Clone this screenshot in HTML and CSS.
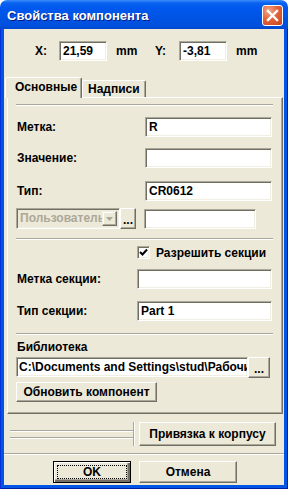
FILE: index.html
```html
<!DOCTYPE html>
<html lang="ru">
<head>
<meta charset="UTF-8" />
<title>Свойства компонента</title>
<link rel="stylesheet" href="styles.css">
</head>
<body>

<div class="window">
  <div class="titlebar">
    <span class="title">Свойства компонента</span>
    <span class="close">
      <svg width="19" height="19" viewBox="0 0 19 19"><path d="M5 5L14 14M14 5L5 14" stroke="#fff" stroke-width="2.4" stroke-linecap="square"/></svg>
    </span>
  </div>

  <div class="frame">
    <div class="client">

      <div class="coords">
        <span class="coord-label">X:</span>
        <span class="field coord">21,59</span>
        <span class="unit">mm</span>
        <span class="coord-label">Y:</span>
        <span class="field coord">-3,81</span>
        <span class="unit">mm</span>
      </div>

      <div class="tabs">
        <div class="tab active">Основные</div>
        <div class="tab">Надписи</div>
      </div>

      <div class="panel">
        <div class="etch"></div>

        <div class="row mt11"><span class="lbl">Метка:</span><span class="field main">R</span></div>
        <div class="row mt11"><span class="lbl">Значение:</span><span class="field main"></span></div>
        <div class="row mt13"><span class="lbl">Тип:</span><span class="field main">CR0612</span></div>

        <div class="row combo-row mt7">
          <div class="combo">
            <span class="combo-text">Пользовательский</span>
            <span class="combo-btn">
              <svg width="7" height="4" viewBox="0 0 7 4"><path d="M0 0H7L3.5 4Z" fill="#aca899"/></svg>
            </span>
          </div>
          <span class="btn dots">...</span>
          <span class="field user"></span>
        </div>

        <div class="etch mt9"></div>

        <div class="check-row mt6">
          <span class="checkbox">
            <svg width="9" height="9" viewBox="0 0 9 9"><path d="M1 4L3.5 6.5L8 1.5" stroke="#000" stroke-width="2" fill="none"/></svg>
          </span>
          <span>Разрешить секции</span>
        </div>

        <div class="row mt10"><span class="lbl">Метка секции:</span><span class="field section"></span></div>
        <div class="row mt12"><span class="lbl">Тип секции:</span><span class="field section">Part 1</span></div>

        <div class="etch mt12"></div>

        <div class="caption mt5">Библиотека</div>
        <div class="path-row mt3">
          <span class="field path">C:\Documents and Settings\stud\Рабочий стол</span>
          <span class="btn path-btn">...</span>
        </div>
        <span class="btn update mt4">Обновить компонент</span>
      </div>

      <div class="bind">
        <div class="rails"></div>
        <div class="vline"></div>
        <span class="btn bind-btn">Привязка к корпусу</span>
      </div>

      <div class="divider"></div>

      <div class="actions">
        <span class="btn ok"><span class="focus">OK</span></span>
        <span class="btn cancel">Отмена</span>
      </div>

    </div>
  </div>
</div>

</body>
</html>
```

FILE: styles.css
```css
body {
  margin: 0;
  background: #fff;
  font-family: "Liberation Sans", Arial, sans-serif;
  font-size: 12px;
  font-weight: 700;
  color: #000;
}
.window {
  width: 288px;
  height: 489px;
  display: flex;
  flex-direction: column;
}
.titlebar {
  height: 29px;
  box-sizing: border-box;
  border-radius: 7px 7px 0 0;
  background: linear-gradient(#3a8cf8 0, #0a62f0 3px, #0058ee 8px, #0054e3 60%, #0050dc 90%, #0046cc 100%);
  display: flex;
  align-items: flex-start;
  justify-content: space-between;
  padding: 5px 5px 0 7px;
}
.title {
  color: #fff;
  font-size: 13px;
  line-height: 21px;
  text-shadow: 1px 1px #0a1883;
}
.close {
  width: 21px;
  height: 21px;
  box-sizing: border-box;
  border: 1px solid #fff;
  border-radius: 3px;
  background: radial-gradient(circle at 30% 25%, #f3a68a 0, #e3643c 45%, #c9421c 100%);
  display: flex;
  align-items: center;
  justify-content: center;
}
.frame {
  flex: 1;
  background: #0055e5;
  padding: 0 4px 4px;
  box-shadow: inset 1px 0 #0831d9, inset -1px 0 #001ea0, inset 0 -1px #001ea0;
  display: flex;
}
.client {
  flex: 1;
  background: #ece9d8;
  display: flex;
  flex-direction: column;
}

/* sunken and raised boxes */
.field {
  box-sizing: border-box;
  height: 20px;
  background: #fff;
  border: 1px solid;
  border-color: #aca899 #fff #fff #aca899;
  box-shadow: inset 1px 1px #716f64, inset -1px -1px #f1efe2;
  padding: 0 3px;
  line-height: 18px;
  white-space: nowrap;
  overflow: hidden;
}
.btn {
  box-sizing: border-box;
  display: flex;
  align-items: center;
  justify-content: center;
  background: #ece9d8;
  border: 1px solid;
  border-color: #fff #716f64 #716f64 #fff;
  box-shadow: inset -1px -1px #aca899;
  white-space: nowrap;
}
.etch {
  height: 0;
  border-top: 1px solid #aca899;
  border-bottom: 1px solid #fff;
}

.mt3 { margin-top: 3px; }
.mt4 { margin-top: 4px; }
.mt5 { margin-top: 5px; }
.mt6 { margin-top: 6px; }
.mt7 { margin-top: 7px; }
.mt9 { margin-top: 9px; }
.mt10 { margin-top: 10px; }
.mt11 { margin-top: 11px; }
.mt12 { margin-top: 12px; }
.mt13 { margin-top: 13px; }

/* coordinates */
.coords {
  display: flex;
  align-items: center;
  margin-top: 12px;
  padding-left: 31px;
  height: 20px;
}
.coord-label { width: 24px; }
.coord { width: 48px; }
.unit { width: 39px; padding-left: 9px; }

/* tabs */
.tabs {
  display: flex;
  align-items: flex-end;
  height: 20px;
  margin-top: 16px;
  padding-left: 1px;
  position: relative;
  z-index: 1;
}
.tab {
  box-sizing: border-box;
  height: 17px;
  padding: 0 5px;
  border: 1px solid;
  border-bottom: none;
  border-color: #fff #716f64 transparent #fff;
  box-shadow: inset -1px 0 #aca899;
  border-radius: 2px 2px 0 0;
  line-height: 16px;
  background: #ece9d8;
}
.tab.active {
  width: 77px;
  height: 21px;
  margin-bottom: -1px;
  padding-left: 9px;
  line-height: 19px;
}

/* tab page */
.panel {
  box-sizing: border-box;
  margin-left: 3px;
  width: 276px;
  height: 317px;
  border: 1px solid;
  border-color: #fff #716f64 #716f64 #fff;
  box-shadow: inset -1px -1px #aca899;
  padding: 6px 9px 0 8px;
  display: flex;
  flex-direction: column;
  align-items: stretch;
}
.row {
  display: flex;
  align-items: center;
  height: 20px;
}
.lbl {
  flex: 1;
  padding-left: 1px;
}
.main { width: 127px; margin-right: 1px; }
.section { width: 135px; margin-right: 1px; }

.combo-row { height: 21px; }
.combo {
  box-sizing: border-box;
  width: 104px;
  height: 21px;
  display: flex;
  border: 1px solid;
  border-color: #aca899 #fff #fff #aca899;
  box-shadow: inset 1px 1px #716f64, inset -1px -1px #f1efe2;
  padding: 2px;
  overflow: hidden;
}
.combo-text {
  flex: 1;
  overflow: hidden;
  white-space: nowrap;
  color: #aca899;
  line-height: 15px;
  padding-left: 1px;
}
.combo-btn {
  width: 15px;
  flex: none;
  box-sizing: border-box;
  display: flex;
  align-items: center;
  justify-content: center;
  border: 1px solid;
  border-color: #f1efe2 #716f64 #716f64 #f1efe2;
  box-shadow: inset -1px -1px #aca899, inset 1px 1px #fff;
}
.dots {
  width: 16px;
  height: 21px;
  align-items: flex-end;
  padding-bottom: 4px;
  line-height: 8px;
}
.user {
  width: 112px;
  margin-left: 8px;
}

.check-row {
  display: flex;
  align-items: center;
  height: 13px;
  padding-left: 121px;
  gap: 6px;
}
.checkbox {
  box-sizing: border-box;
  width: 13px;
  height: 13px;
  background: #fff;
  border: 1px solid;
  border-color: #aca899 #fff #fff #aca899;
  box-shadow: inset 1px 1px #716f64, inset -1px -1px #f1efe2;
  display: flex;
  align-items: center;
  justify-content: center;
}

.caption {
  height: 14px;
  line-height: 14px;
  padding-left: 1px;
}
.path-row {
  display: flex;
  height: 21px;
}
.path {
  width: 232px;
  height: 20px;
  padding-left: 2px;
}
.path-btn {
  width: 22px;
  height: 21px;
  align-items: flex-end;
  padding-bottom: 4px;
  line-height: 8px;
}
.update {
  width: 141px;
  height: 20px;
  align-self: flex-start;
}

/* binding row and dialog buttons */
.bind {
  display: flex;
  align-items: center;
  height: 24px;
  margin-top: 8px;
  padding-left: 6px;
}
.rails {
  width: 123px;
  height: 6px;
  border-top: 1px solid #aca899;
  border-bottom: 1px solid #aca899;
  box-shadow: 0 1px #fff, inset 0 1px #fff;
}
.vline {
  width: 0;
  height: 24px;
  border-left: 1px solid #aca899;
  border-right: 1px solid #fff;
}
.bind-btn {
  width: 137px;
  height: 24px;
  margin-left: 4px;
}
.divider {
  margin-top: 7px;
  border-top: 1px solid #aca899;
  border-bottom: 1px solid #fff;
}
.actions {
  display: flex;
  gap: 8px;
  margin-top: 6px;
  padding-left: 49px;
}
.actions .btn { height: 22px; }
.ok {
  width: 78px;
  border-color: #000;
  box-shadow: inset 1px 1px #fff, inset -2px -2px #716f64, inset -3px -3px #aca899;
  padding: 3px;
}
.focus {
  flex: 1;
  align-self: stretch;
  display: flex;
  align-items: center;
  justify-content: center;
  border: 1px dotted #000;
}
.cancel { width: 98px; }
```
